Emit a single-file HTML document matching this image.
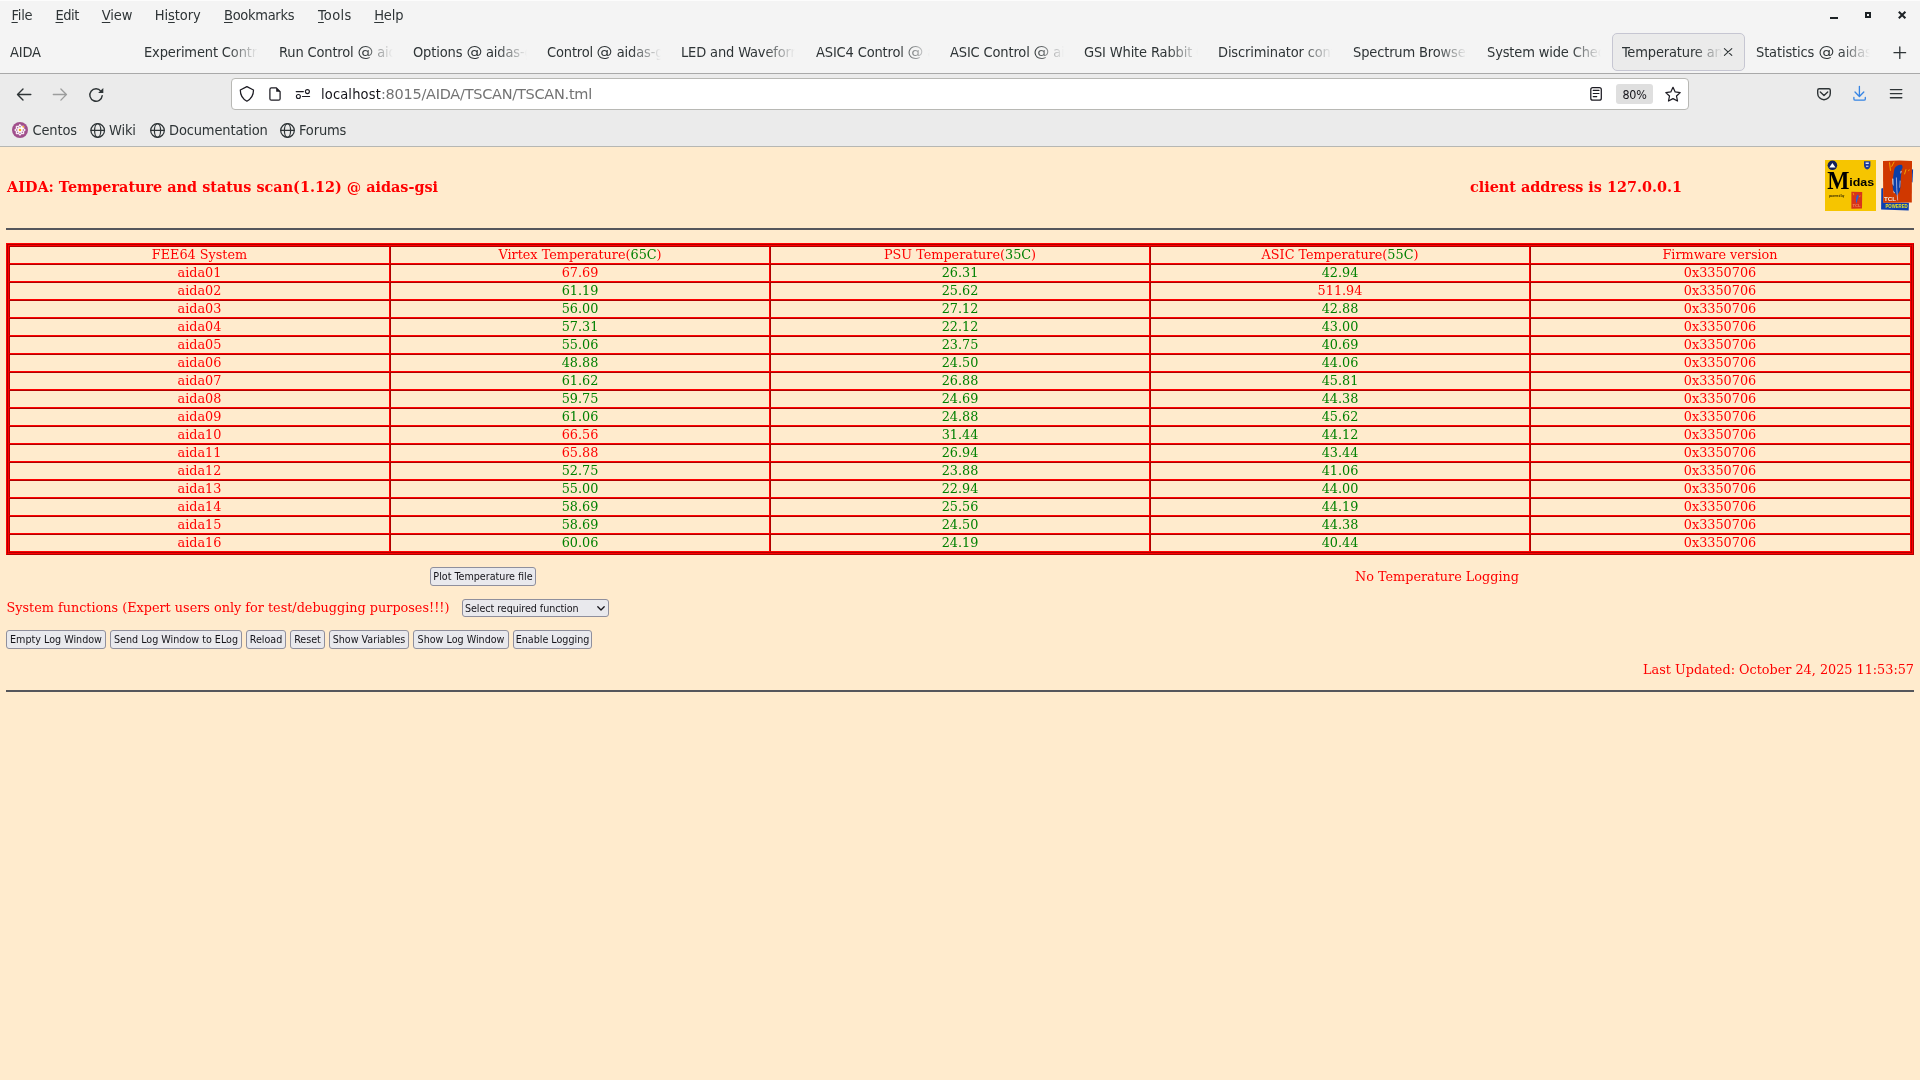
<!DOCTYPE html>
<html lang="en">
<head>
<meta charset="utf-8">
<title>Temperature and status scan @ aidas-gsi</title>
<style>
html,body{margin:0;padding:0}
body{width:1920px;height:1080px;overflow:hidden;position:relative;background:#ffebcd;font-family:"DejaVu Serif","Liberation Serif",serif;font-size:12.8px;color:#f00}
.abs,.chrome *,.pg>i{position:absolute;white-space:nowrap}
/* ---------- browser chrome ---------- */
.chrome,.pg{-webkit-mask-image:linear-gradient(#000,#000);mask-image:linear-gradient(#000,#000)}
.chrome{position:absolute;left:0;top:0;width:1920px;height:147px;background:#ebebeb;font-family:"DejaVu Sans Condensed","DejaVu Sans","Liberation Sans",sans-serif;color:#2e3436}
.topbar{left:0;top:0;width:1920px;height:73px;background:#f4f4f4;border-top:1px solid #fcfcfc;box-sizing:border-box}
.sep1{left:0;top:73px;width:1920px;height:1px;background:#a9a9a9}
.sep2{left:0;top:146px;width:1920px;height:1px;background:#b6b7b3}
.menu span{top:5px;font-size:14.5px;line-height:20px;letter-spacing:-0.3px}
.menu u{position:static;text-decoration:underline;text-underline-offset:2px;text-decoration-thickness:1px}
.tab{top:41px;width:114px;height:22px;overflow:hidden;font-size:14.5px;line-height:22px;letter-spacing:-0.150px;-webkit-mask-image:linear-gradient(to right,#000 0,#000 84px,transparent 114px);mask-image:linear-gradient(to right,#000 0,#000 84px,transparent 114px)}
.tab s{position:static;display:inline-block;text-decoration:none;transform:scaleX(1.220);margin:0 1.400px}
.tab.act{width:100px;-webkit-mask-image:linear-gradient(to right,#000 0,#000 72px,transparent 100px);mask-image:linear-gradient(to right,#000 0,#000 72px,transparent 100px)}
.acttab{left:1612px;top:33px;width:133px;height:38px;box-sizing:border-box;border:1px solid #c6c6d2;border-radius:5px;background:#ebebeb}
.urlbar{left:231px;top:78px;width:1458px;height:32px;box-sizing:border-box;border:1px solid #b8b8b4;border-radius:4px;background:#fff}
.url{left:321px;top:84px;font-family:"DejaVu Sans","Liberation Sans",sans-serif;font-size:14.5px;line-height:20px;letter-spacing:-0.260px;color:#737373}
.url b{position:static;font-family:"DejaVu Sans Condensed","DejaVu Sans",sans-serif;font-weight:normal;letter-spacing:0.150px;color:#15141a}
.zoom{left:1616px;top:84px;width:37px;height:20px;border-radius:3px;background:#dfdfdf;font-size:12.4px;line-height:21px;text-align:center;color:#15141a;letter-spacing:-0.3px}
.bm{top:120px;font-size:14.5px;line-height:20px;letter-spacing:-0.150px}
svg{position:absolute;overflow:visible}
/* ---------- page ---------- */
.page{position:absolute;left:0;top:147px;width:1920px;height:933px;background:#ffebcd}
.pg{position:absolute;left:0;top:0;width:1920px;height:1080px;background:#ffebcd;z-index:1}
.chrome{z-index:2}
h3.t{margin:0;font-size:14.4px;font-weight:bold;line-height:18px;color:#f00}
.hr{left:6px;width:1908px;height:2px;background:#55565b}
.ring{position:absolute;box-sizing:border-box;border:1px solid;border-color:#f00 #b00000 #b00000 #f00}
.ring.r2{border-color:#b00000 #f00 #f00 #b00000}
.pg>.ring{left:6px;top:243px;width:1908px;height:312px}
.ring .ring{left:0;top:0;right:0;bottom:0}
table.d{left:9px;top:246px;width:1902px;border-collapse:separate;border-spacing:0;table-layout:fixed}
table.d *{position:static}
table.d td:last-child,table.d th:last-child{padding-right:1px}
table.d td,table.d th{box-sizing:border-box;height:18px;padding:0;border:1px solid;border-color:#b00000 #f00 #f00 #b00000;line-height:16px;vertical-align:top;text-align:center;font-weight:normal;color:#f00}
.g,table.d td.g{color:#008000}
.btn{box-sizing:border-box;height:19px;border:1px solid #8f8f9d;border-radius:3px;background:#e9e9ed;color:#15141a;font-family:"DejaVu Sans Condensed","DejaVu Sans",sans-serif;font-size:10.67px;line-height:17px;text-align:center;padding:0}
.sel{box-sizing:border-box;left:462px;top:599px;width:147px;height:18px;border:1px solid #8f8f9d;border-radius:3px;background:#e9e9ed;color:#15141a;font-family:"DejaVu Sans Condensed","DejaVu Sans",sans-serif;font-size:10.67px;line-height:17px;padding-left:2px;letter-spacing:-0.060px}
</style>
</head>
<body>
<div class="chrome">
  <div class="topbar"></div>
  <div class="menu">
    <span style="left:11.500px;letter-spacing:-0.200px"><u>F</u>ile</span>
    <span style="left:55.500px;letter-spacing:-0.500px"><u>E</u>dit</span>
    <span style="left:101.800px;letter-spacing:-0.100px"><u>V</u>iew</span>
    <span style="left:154.800px;letter-spacing:-0.100px">Hi<u>s</u>tory</span>
    <span style="left:224px"><u>B</u>ookmarks</span>
    <span style="left:318px;letter-spacing:0.350px"><u>T</u>ools</span>
    <span style="left:374.200px;letter-spacing:-0.150px"><u>H</u>elp</span>
  </div>
  <div class="acttab"></div>
  <div class="tabs">
    <div class="tab" style="left:10px">AIDA</div>
    <div class="tab" style="left:144px">Experiment Control <s>@</s> aidas-gsi</div>
    <div class="tab" style="left:279px">Run Control <s>@</s> aidas-gsi</div>
    <div class="tab" style="left:413px">Options <s>@</s> aidas-gsi</div>
    <div class="tab" style="left:547px">Control <s>@</s> aidas-gsi</div>
    <div class="tab" style="left:681px">LED and Waveform <s>@</s> aidas-gsi</div>
    <div class="tab" style="left:816px">ASIC4 Control <s>@</s> aidas-gsi</div>
    <div class="tab" style="left:950px">ASIC Control <s>@</s> aidas-gsi</div>
    <div class="tab" style="left:1084px">GSI White Rabbit Control</div>
    <div class="tab" style="left:1218px">Discriminator control <s>@</s> aidas-gsi</div>
    <div class="tab" style="left:1353px">Spectrum Browser <s>@</s> aidas-gsi</div>
    <div class="tab" style="left:1487px">System wide Checks <s>@</s> aidas-gsi</div>
    <div class="tab act" style="left:1622px">Temperature and status scan <s>@</s> aidas-gsi</div>
    <div class="tab" style="left:1756px">Statistics <s>@</s> aidas-gsi</div>
  </div>
  <div class="sep1"></div>
  <div class="urlbar"></div>
  <div class="url"><b>localhost</b>:8015/AIDA/TSCAN/TSCAN.tml</div>
  <div class="zoom">80%</div>
  <div class="bm" style="left:32.500px">Centos</div>
  <div class="bm" style="left:109px">Wiki</div>
  <div class="bm" style="left:169px">Documentation</div>
  <div class="bm" style="left:299px">Forums</div>
  <!--ICONS_START-->
<svg style="left:0;top:0" width="1920" height="147" viewBox="0 0 1920 147" fill="none" stroke="#2e3436" stroke-width="1.3" stroke-linecap="round" stroke-linejoin="round">
  <!-- window controls -->
  <rect x="1830" y="17" width="8" height="2" fill="#1e2326" stroke="none"/>
  <rect x="1866" y="13" width="4" height="4" stroke="#1e2326" stroke-width="2" stroke-linejoin="miter"/>
  <path d="M1898.8 11.7l6.6 6.6M1905.4 11.7l-6.6 6.6" stroke="#1e2326" stroke-width="2" stroke-linecap="butt"/>
  <!-- new tab -->
  <path d="M1894 52.7h11.6M1899.8 47v11.4"/>
  <!-- tab close -->
  <path d="M1724.4 48.6l7.4 6.8M1731.8 48.6l-7.4 6.8" stroke-width="1.1"/>
  <!-- back / forward / reload -->
  <path d="M17.6 94.5h13.2M23 89l-5.5 5.5 5.5 5.6" stroke-width="1.4"/>
  <path d="M53.3 94.5h13.2M60.9 89l5.5 5.5-5.5 5.6" stroke="#9c9d9d" stroke-width="1.3"/>
  <path d="M102.2 95.6A6.2 6.2 0 1 1 101 91.3" stroke-width="1.4"/>
  <path d="M103.300 87.900v5h-5.200z" fill="#2e3436" stroke="none"/>
  <!-- shield, page, permissions -->
  <g stroke="#1c1b22" stroke-width="1.25">
  <path d="M246.9 86.6L253.5 90C253.5 95.6 251 99 246.9 101.2C242.8 99 240.3 95.6 240.3 90Z"/>
  <path d="M271.4 87.9h5l3.7 3.8v7a1.5 1.5 0 0 1-1.5 1.5h-7.2a1.5 1.5 0 0 1-1.5-1.5v-9.3a1.5 1.5 0 0 1 1.5-1.500z"/>
  <path d="M276.2 87.7v4h4z" fill="#1c1b22" stroke="none"/>
  <path d="M296.2 91.6h7.2M302.4 96.5h7.2" stroke-width="1.1"/>
  <circle cx="307.4" cy="91.6" r="2" stroke-width="1.1"/>
  <circle cx="298.4" cy="96.5" r="2" stroke-width="1.1"/>
  <!-- reader, star -->
  <rect x="1590.8" y="87.6" width="10.5" height="12.6" rx="2"/>
  <path d="M1593.2 90.4h5.8M1593.2 93.5h5.8M1593.2 96.6h3.6" stroke-width="1.1"/>
  <path d="M1673.0 87.3 L1675.2 91.9 L1680.2 92.6 L1676.5 96.0 L1677.5 101.0 L1673.0 98.6 L1668.5 101.0 L1669.5 96.0 L1665.8 92.6 L1670.8 91.9Z"/>
  </g>
  <!-- pocket, downloads, menu -->
  <path d="M1819.2 88.7h9.6a1.5 1.5 0 0 1 1.5 1.5v3.2a6.300 6.300 0 0 1-12.600 0v-3.2a1.5 1.5 0 0 1 1.5-1.500z" stroke-width="1.4"/>
  <path d="M1820.3 92l3.700 3.500 3.700-3.500" stroke-width="1.4"/>
  <path d="M1859.400 86.300v10M1855 92l4.400 4.500 4.400-4.500M1853.900 97.500v1.400a1.300 1.300 0 0 0 1.300 1.300h8.800a1.300 1.300 0 0 0 1.300-1.300v-1.400" stroke="#3584e4"/>
  <path d="M1890.400 89.600h11.400M1890.400 93.600h11.400M1890.400 97.700h11.400" stroke-width="1.400"/>
  <!-- bookmarks icons -->
  <circle cx="20" cy="130" r="8" fill="#a14f8c" stroke="none"/>
  <path d="M20 124.600l1.500 1.700 2.300-.100-.100 2.300 1.700 1.500-1.700 1.500.100 2.300-2.300-.100-1.500 1.700-1.500-1.700-2.300.100.100-2.300-1.700-1.500 1.700-1.500-.100-2.300 2.300.100z" fill="#fff" stroke="#fff" stroke-width=".8"/>
  <g fill="#a14f8c" stroke="none"><circle cx="20" cy="126.700" r=".8"/><circle cx="20" cy="133.300" r=".8"/><circle cx="16.700" cy="130" r=".8"/><circle cx="23.300" cy="130" r=".8"/><circle cx="17.700" cy="127.700" r=".7"/><circle cx="17.700" cy="132.300" r=".7"/><circle cx="22.300" cy="132.300" r=".7"/></g>
  <circle cx="20" cy="130" r="1.300" fill="#f5a623" stroke="none"/>
  <circle cx="23.300" cy="126.700" r=".9" fill="#f5a623" stroke="none"/>
  <g stroke-width="1.250">
  <circle cx="97.700" cy="130.500" r="6.800"/><ellipse cx="97.700" cy="130.500" rx="3.100" ry="6.800"/><path d="M91 130.300h13.400"/>
  <circle cx="157.500" cy="130.500" r="6.800"/><ellipse cx="157.500" cy="130.500" rx="3.100" ry="6.800"/><path d="M150.800 130.300h13.400"/>
  <circle cx="287.500" cy="130.500" r="6.800"/><ellipse cx="287.500" cy="130.500" rx="3.100" ry="6.800"/><path d="M280.800 130.300h13.400"/>
  </g>
</svg>
<!--ICONS_END-->
  <div class="sep2"></div>
</div>
<div class="pg">
  <h3 class="t abs" style="left:7px;top:178px">AIDA: Temperature and status scan(1.12) @ aidas-gsi</h3>
  <h3 class="t abs" style="left:1470px;top:178px">client address is 127.0.0.1</h3>
  <!--LOGOS_START-->
<svg style="position:absolute;left:1820px;top:155px;overflow:visible" width="100" height="62" viewBox="1820 155 100 62">
  <!-- Midas logo -->
  <rect x="1825" y="160" width="51" height="51" fill="#f6c500"/>
  <circle cx="1832.400" cy="165.300" r="4.800" fill="#14205c"/>
  <path d="M1829.300 167.600l3.100-4.600 3.100 4.600z" fill="#fff"/>
  <path d="M1864 161.200h6.400v4.200c0 2-1.400 3.300-3.200 4.100-1.800-.8-3.200-2.100-3.200-4.100z" fill="#1b3a96"/>
  <path d="M1865.600 162.600h3.200v1.400h-3.200zM1866 165.800h2.400v1h-2.400z" fill="#dfe6f5"/>
  <text x="1827.200" y="188.900" font-family="'Liberation Serif','DejaVu Serif',serif" font-weight="bold" font-size="25.500" textLength="22.200" lengthAdjust="spacingAndGlyphs" fill="#000">M</text>
  <text x="1849.200" y="186" font-family="'Liberation Sans','DejaVu Sans',sans-serif" font-weight="bold" font-size="11.200" textLength="25" lengthAdjust="spacingAndGlyphs" fill="#000">idas</text>
  <text x="1828.900" y="197" font-family="'Liberation Sans','DejaVu Sans',sans-serif" font-weight="bold" font-size="3.200" textLength="15.500" lengthAdjust="spacingAndGlyphs" fill="#2a2200">powered by</text>
  <path d="M1851.400 191.700l10.800.300-.200 16.500-10.600.200z" fill="#d8341a"/>
  <path d="M1857.800 194.300c-1.600 1.600-2.300 4.800-1.500 9.400.900-3 1.900-5.600 2.500-7.400z" fill="#2a5fd2"/>
  <path d="M1853.200 193l.600 2.200M1860.200 195.500l-.700 1.600" stroke="#f6b400" stroke-width=".700" fill="none"/>
  <text x="1852.600" y="207.300" font-family="'Liberation Sans',sans-serif" font-weight="bold" font-size="2.600" textLength="8" lengthAdjust="spacingAndGlyphs" fill="#f08a5a">TCL</text>
  <!-- Tcl powered logo -->
  <path d="M1881.300 188.500l1.900-.500.200 14.600 25.500.100-.200 7.700-27.600-.800z" fill="#0b3eb0"/>
  <path d="M1911.300 169.300l1.800.300-.600 12.800-1.300-.300z" fill="#0b3eb0"/>
  <path d="M1883 160.900l16.500-.500 12.500.700-.200 41.500-28.600.100z" fill="#d03800"/>
  <path d="M1901.800 164.900C1898.500 164.600 1895 166.500 1894.300 169.500C1893.600 173 1893.200 177 1892.700 180.500C1892.400 184 1892.800 188 1893.300 191L1897.200 195.800L1899.900 190.800C1900.600 187 1900.800 183.500 1900.700 180C1900.900 176.500 1901.200 174 1901.600 171.500L1900.500 172L1902.300 168.500C1902.800 167 1902.600 165.600 1901.800 164.900Z" fill="#0b3fa8"/>
  <path d="M1892.300 178.500l1 .300.200 7.500-1-2.300zM1893.200 190.300l1.700 2.600-1 .400zM1899.800 180.500l.600.200-.300 6.200-.600 1.400z" fill="#f4efe8"/>
  <path d="M1896.400 177.500c.100 7.500.500 15 1.300 23" stroke="#ddd6f0" stroke-width=".700" fill="none"/>
  <path d="M1900.300 171.600l1.500-.600-1 3z" fill="#f3e6dc"/>
  <path d="M1889.500 162.300l1 8.500M1894.200 161.700l-2.600 5M1906 169.300l-1.500 5M1909.300 169.500l-.800 1.600" stroke="#f6b000" stroke-width=".900" fill="none"/>
  <text x="1884" y="200.900" font-family="'Liberation Sans','DejaVu Sans',sans-serif" font-weight="bold" font-size="5.600" textLength="12" lengthAdjust="spacingAndGlyphs" fill="#f3ece4">TCL</text>
  <text x="1885.400" y="207.900" font-family="'Liberation Sans','DejaVu Sans',sans-serif" font-weight="bold" font-size="5.200" textLength="22.300" lengthAdjust="spacingAndGlyphs" fill="#f0e61e">POWERED</text>
</svg>
<!--LOGOS_END-->
  <div class="abs hr" style="top:228px"></div>
  <div class="ring r1"><div class="ring r2"><div class="ring r1"></div></div></div>
  <table class="d abs">
<colgroup><col style="width:381px"><col style="width:380px"><col style="width:380px"><col style="width:380px"><col style="width:381px"></colgroup>
<tr><th>FEE64 System</th><th>Virtex Temperature(<span class="g">65C</span>)</th><th>PSU Temperature(<span class="g">35C</span>)</th><th>ASIC Temperature(<span class="g">55C</span>)</th><th>Firmware version</th></tr>
<tr><td>aida01</td><td class="r">67.69</td><td class="g">26.31</td><td class="g">42.94</td><td>0x3350706</td></tr>
<tr><td>aida02</td><td class="g">61.19</td><td class="g">25.62</td><td class="r">511.94</td><td>0x3350706</td></tr>
<tr><td>aida03</td><td class="g">56.00</td><td class="g">27.12</td><td class="g">42.88</td><td>0x3350706</td></tr>
<tr><td>aida04</td><td class="g">57.31</td><td class="g">22.12</td><td class="g">43.00</td><td>0x3350706</td></tr>
<tr><td>aida05</td><td class="g">55.06</td><td class="g">23.75</td><td class="g">40.69</td><td>0x3350706</td></tr>
<tr><td>aida06</td><td class="g">48.88</td><td class="g">24.50</td><td class="g">44.06</td><td>0x3350706</td></tr>
<tr><td>aida07</td><td class="g">61.62</td><td class="g">26.88</td><td class="g">45.81</td><td>0x3350706</td></tr>
<tr><td>aida08</td><td class="g">59.75</td><td class="g">24.69</td><td class="g">44.38</td><td>0x3350706</td></tr>
<tr><td>aida09</td><td class="g">61.06</td><td class="g">24.88</td><td class="g">45.62</td><td>0x3350706</td></tr>
<tr><td>aida10</td><td class="r">66.56</td><td class="g">31.44</td><td class="g">44.12</td><td>0x3350706</td></tr>
<tr><td>aida11</td><td class="r">65.88</td><td class="g">26.94</td><td class="g">43.44</td><td>0x3350706</td></tr>
<tr><td>aida12</td><td class="g">52.75</td><td class="g">23.88</td><td class="g">41.06</td><td>0x3350706</td></tr>
<tr><td>aida13</td><td class="g">55.00</td><td class="g">22.94</td><td class="g">44.00</td><td>0x3350706</td></tr>
<tr><td>aida14</td><td class="g">58.69</td><td class="g">25.56</td><td class="g">44.19</td><td>0x3350706</td></tr>
<tr><td>aida15</td><td class="g">58.69</td><td class="g">24.50</td><td class="g">44.38</td><td>0x3350706</td></tr>
<tr><td>aida16</td><td class="g">60.06</td><td class="g">24.19</td><td class="g">40.44</td><td>0x3350706</td></tr>
  </table>
  <div class="abs btn" style="left:430px;top:567px;width:106px">Plot Temperature file</div>
  <div class="abs" style="left:1355px;top:569px;line-height:16px">No Temperature Logging</div>
  <div class="abs" style="left:6.500px;top:600px;line-height:16px">System functions (Expert users only for test/debugging purposes!!!)</div>
  <div class="abs sel">Select required function</div>
  <svg class="abs" style="left:595px;top:603px" width="12" height="10" viewBox="595 603 12 10"><path d="M597.800 606.800l3.200 3.200 3.200-3.200" fill="none" stroke="#15141a" stroke-width="1.300" stroke-linecap="round" stroke-linejoin="round"/></svg>
  <div class="abs btn" style="left:6px;top:630px;width:100px">Empty Log Window</div>
  <div class="abs btn" style="left:110px;top:630px;width:132px">Send Log Window to ELog</div>
  <div class="abs btn" style="left:246px;top:630px;width:40px">Reload</div>
  <div class="abs btn" style="left:290px;top:630px;width:35px">Reset</div>
  <div class="abs btn" style="left:329px;top:630px;width:80px">Show Variables</div>
  <div class="abs btn" style="left:413px;top:630px;width:96px">Show Log Window</div>
  <div class="abs btn" style="left:513px;top:630px;width:79px">Enable Logging</div>
  <div class="abs" style="right:6px;top:662px;line-height:16px">Last Updated: October 24, 2025 11:53:57</div>
  <div class="abs hr" style="top:690px"></div>
</div>
</body>
</html>
